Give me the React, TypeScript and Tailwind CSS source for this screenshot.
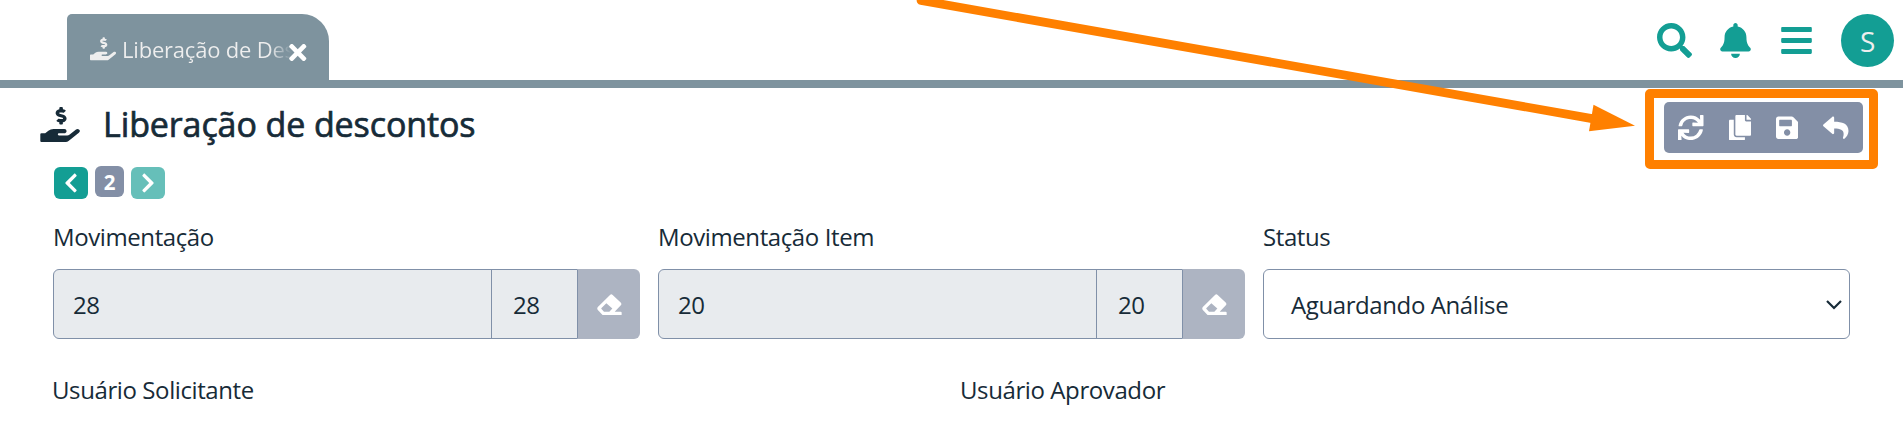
import { FaSync, FaHandHoldingUsd, FaSearch, FaBell, FaBars, FaTimes, FaReply, FaSave, FaCopy, FaChevronLeft, FaChevronRight } from "react-icons/fa";

function EraserIcon() {
  return (
    <svg viewBox="0 0 75 64" className="h-[21.5px] w-[25px]" fill="currentColor" fillRule="evenodd">
      <path d="M39 2.5 Q43 -1 47 2.5 L71 25 Q75 29 71.500 33.500 L53 53 H71 Q74 53 74 56 V61 Q74 64 71 64 H21 Q18 64 16 62 L2.500 48 Q-1 43.500 2.500 39 Z M28 27.500 L13.500 42 Q12 43.500 13.500 45 L21 53 H37 L46 43.500 Z" />
    </svg>
  );
}

function Label({ children }: { children: string }) {
  return <div className="h-[36px] whitespace-nowrap leading-[34px]">{children}</div>;
}

function LookupField({ label, value }: { label: string; value: string }) {
  return (
    <div className="w-[587px]">
      <Label>{label}</Label>
      <div className="mt-[13px] flex h-[70px] leading-[70px]">
        <div className="flex flex-1 overflow-hidden rounded-l-[6px] border border-[#8090a8] bg-[#e8ebee]">
          <div className="w-[438px] border-r border-[#8090a8] pl-[19px] leading-[70px]">{value}</div>
          <div className="pl-[21px] leading-[70px]">{value}</div>
        </div>
        <div className="flex w-[62px] items-center justify-center rounded-r-[6px] bg-[#adb4c2] pt-px text-white">
          <EraserIcon />
        </div>
      </div>
    </div>
  );
}

export default function App() {
  return (
    <div className="relative h-[421px] w-[1903px] overflow-hidden bg-white font-['Open_Sans',sans-serif] text-[24px] tracking-[-0.4px] text-[#172b38]">
      <header className="flex h-[88px] items-start justify-between border-b-8 border-[#7e939e] pl-[67px] pr-[9px] pt-[14px]">
        <div className="flex h-[66px] w-[262px] items-center rounded-tl-[5px] rounded-tr-[27px] bg-[#7e939e] pl-[23px] text-[22px] text-[#eeeeee]">
          <FaHandHoldingUsd className="mt-[4px] h-[23.500px] w-[26px] shrink-0" />
          <span className="ml-[6px] mt-[4px] w-[180px] shrink-0 whitespace-nowrap bg-linear-to-r from-[#eeeeee] from-82% to-[#7e939e] to-94% bg-clip-text tracking-[-0.2px] text-transparent">Liberação de Des</span>
          <FaTimes className="ml-[-13px] mt-[10px] h-[25px] w-[17.500px] shrink-0 text-white" />
        </div>
        <nav className="flex h-[53px] items-center text-[#139e94]">
          <FaSearch className="size-[35px]" />
          <FaBell className="ml-[28px] h-[35px] w-[31px]" />
          <FaBars className="ml-[30px] h-[35px] w-[31px]" />
          <div className="ml-[29px] flex size-[53px] items-center justify-center rounded-full bg-[#139e94] text-[28px] text-[#eeeeee]">S</div>
        </nav>
      </header>

      <div className="flex h-[78px] items-start justify-between pl-[40px] pr-[40px]">
        <div className="flex items-center">
          <FaHandHoldingUsd className="h-[35px] w-[40px]" />
          <h1 className="ml-[23px] whitespace-nowrap text-[34px] leading-[72px] tracking-[-0.1px] [-webkit-text-stroke:0.7px_#172b38]">Liberação de descontos</h1>
        </div>
        <div className="mt-[14px] flex h-[51px] w-[199px] items-center gap-[25px] rounded-[5px] bg-[#838fa6] pl-[14px] text-white">
          <FaSync className="size-[25.500px]" />
          <FaCopy className="h-[25.500px] w-[22.300px]" />
          <FaSave className="h-[25.500px] w-[22.300px]" />
          <FaReply className="size-[25.500px]" />
        </div>
      </div>

      <div className="flex items-start pl-[54px] text-white">
        <div className="mt-px flex h-[32px] w-[34px] items-center justify-center rounded-[6px] bg-[#139e94]">
          <FaChevronLeft className="h-[22px] w-[14px]" />
        </div>
        <div className="ml-[7px] flex h-[31px] w-[29px] items-center justify-center rounded-[6px] bg-[#838fa6] pt-px text-[20.5px] font-bold tracking-normal">2</div>
        <div className="ml-[7px] mt-px flex h-[32px] w-[34px] items-center justify-center rounded-[6px] bg-[#66bfb9]">
          <FaChevronRight className="h-[22px] w-[14px]" />
        </div>
      </div>

      <div className="flex gap-[18px] pl-[53px] pt-[21px]">
        <LookupField label="Movimentação" value="28" />
        <LookupField label="Movimentação Item" value="20" />
        <div className="w-[587px]">
          <Label>Status</Label>
          <div className="mt-[13px] flex h-[70px] items-center justify-between rounded-[6px] border border-[#8090a8] pl-[27px] pr-[7px]">
            <span className="mt-[2px]">Aguardando Análise</span>
            <svg viewBox="0 0 16 10" className="mt-[2px] h-[10px] w-[16px]" fill="none" stroke="currentColor" strokeWidth="2.200">
              <path d="M1 1 L8 8 L15 1" />
            </svg>
          </div>
        </div>
      </div>

      <div className="flex pl-[52px] pt-[34px]">
        <div className="w-[908px]"><Label>Usuário Solicitante</Label></div>
        <Label>Usuário Aprovador</Label>
      </div>

      <div className="absolute left-[1645px] top-[89px] h-[80px] w-[233px] rounded-[5px] border-[9px] border-[#ff8000]" />
      <svg viewBox="0 0 1903 421" className="pointer-events-none absolute left-0 top-0 h-[421px] w-[1903px]">
        <line x1="921" y1="0.500" x2="1592" y2="118.600" stroke="#ff8000" strokeWidth="8.700" strokeLinecap="round" />
        <path d="M1593.500 104.700 L1635 125.700 L1589 131.300 Z" fill="#ff8000" />
      </svg>
    </div>
  );
}
